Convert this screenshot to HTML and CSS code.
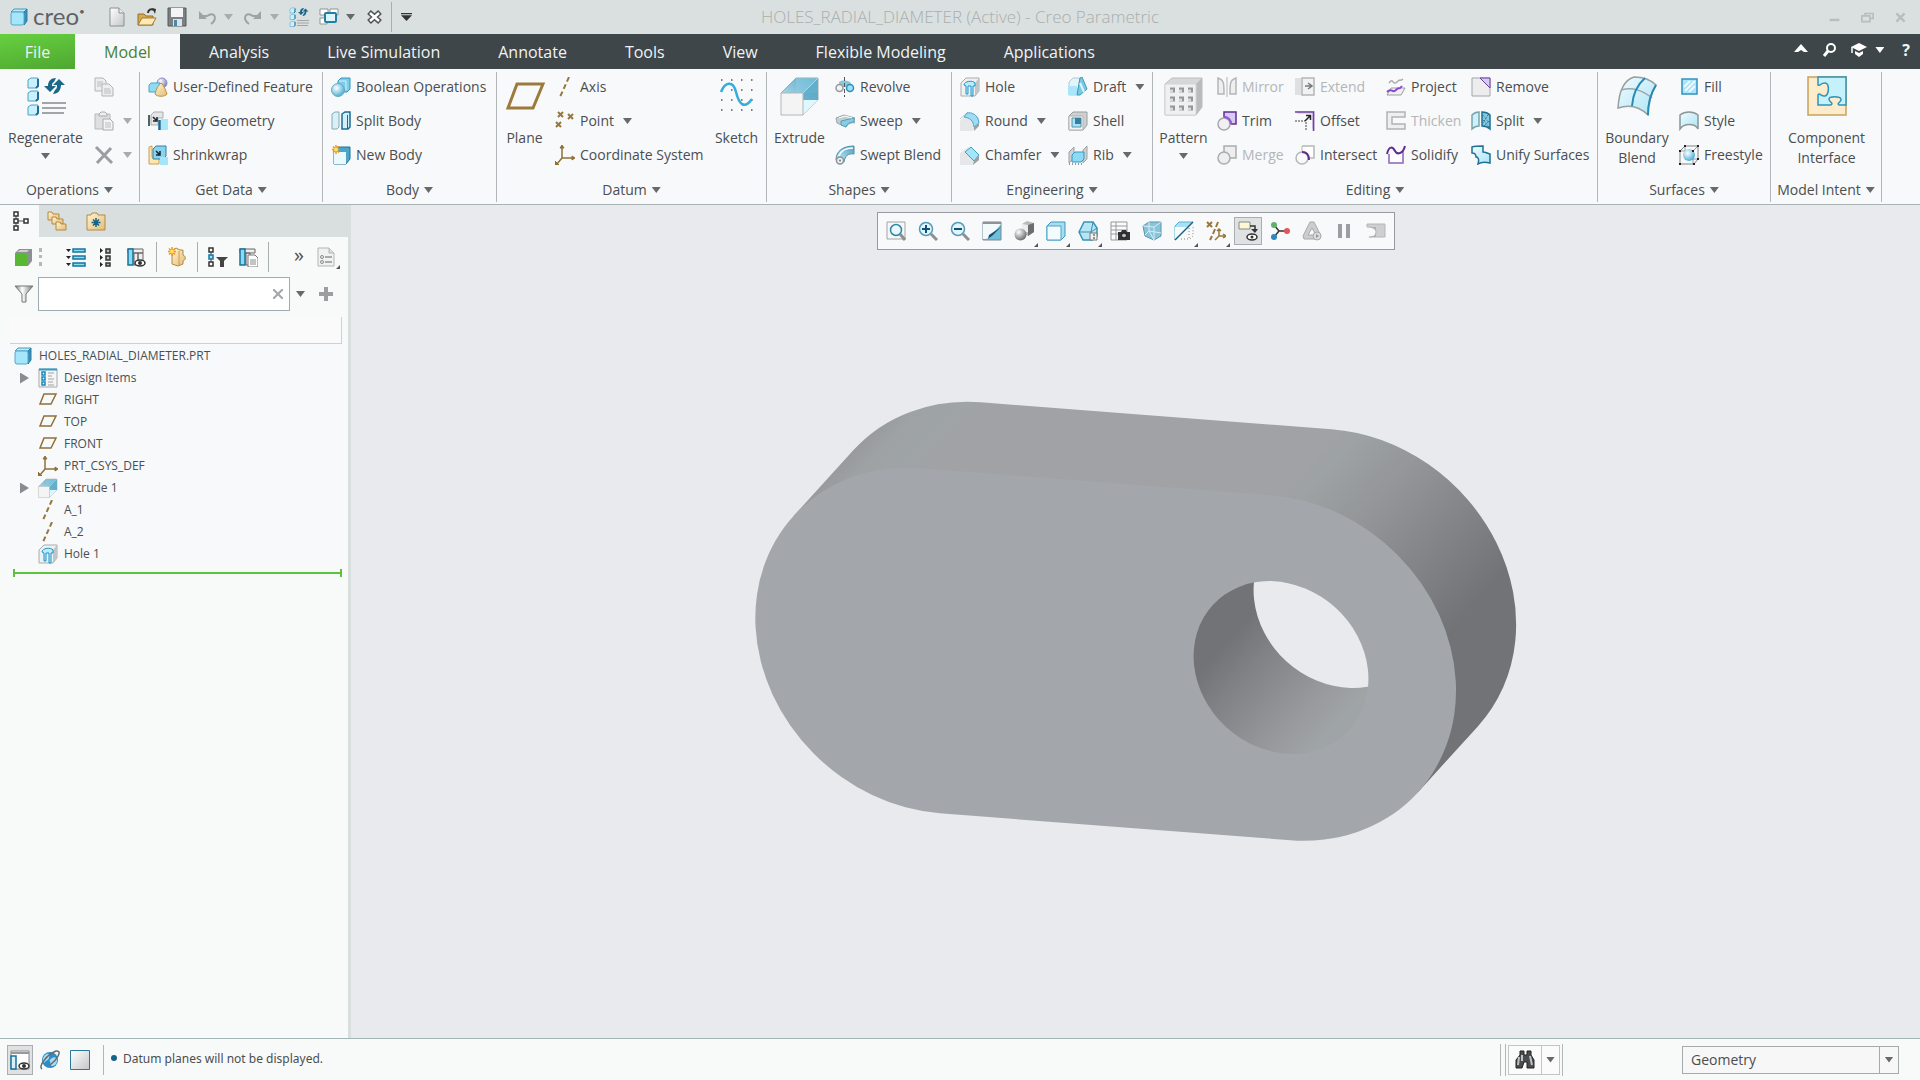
FILE: index.html
```html
<!DOCTYPE html>
<html lang="en">
<head>
<meta charset="utf-8">
<title>HOLES_RADIAL_DIAMETER (Active) - Creo Parametric</title>
<link rel="stylesheet" href="styles.css">
</head>
<body>
<svg class="defs" width="0" height="0" aria-hidden="true">
<defs>
<linearGradient id="blue" x1="0" y1="0" x2="1" y2="1"><stop offset="0" stop-color="#f2fbfe"/><stop offset="1" stop-color="#a9e4f7"/></linearGradient>
<linearGradient id="deep" x1="1" y1="0" x2="0" y2="1"><stop offset="0" stop-color="#4e9fc0"/><stop offset="1" stop-color="#c9f0fb"/></linearGradient>
<linearGradient id="gray" x1="0" y1="0" x2="1" y2="1"><stop offset="0" stop-color="#fff"/><stop offset="1" stop-color="#c4c6c8"/></linearGradient>
<linearGradient id="metal" x1="0" y1="0" x2="1" y2="0"><stop offset="0" stop-color="#777"/><stop offset=".4" stop-color="#fff"/><stop offset="1" stop-color="#777"/></linearGradient>
<linearGradient id="gold" x1="0" y1="0" x2="1" y2="1"><stop offset="0" stop-color="#fff3d4"/><stop offset="1" stop-color="#e5bd76"/></linearGradient>
<radialGradient id="ball" cx=".38" cy=".35" r=".65"><stop offset="0" stop-color="#fff"/><stop offset="1" stop-color="#4db1d6"/></radialGradient>
<radialGradient id="steel" cx=".35" cy=".3" r=".75"><stop offset="0" stop-color="#fff"/><stop offset="1" stop-color="#666"/></radialGradient>
<radialGradient id="lilac" cx=".35" cy=".3" r=".7"><stop offset="0" stop-color="#fff"/><stop offset="1" stop-color="#7d83c0"/></radialGradient>

<symbol id="cube" viewBox="0 0 20 20"><path d="M2 5l3-3h13l-3 3z" fill="#bfeaf8" stroke="#3f9cc0"/><path d="M15 5l3-3v12l-3 4z" fill="#3a8fb8" stroke="#2a7fa8"/><rect x="2" y="5" width="13" height="13" rx="2" fill="#a5e6fb" stroke="#53a8c8"/></symbol>
<symbol id="page" viewBox="0 0 20 20"><path d="M3 1h9l5 5v13H3z" fill="url(#gray)" stroke="#8b8f91"/><path d="M12 1v5h5" fill="#eee" stroke="#8b8f91"/></symbol>
<symbol id="open" viewBox="0 0 20 20"><path d="M1 18V7h6l2 2h7v9z" fill="#d9a94e" stroke="#94702b"/><path d="M1 18l4-7h14l-4 7z" fill="#ffe9b5" stroke="#a07c36"/><path d="M11 6c0-3 3-5 6-3" fill="none" stroke="#333" stroke-width="2"/><path d="M15 1l4 1-1 5z" fill="#333"/></symbol>
<symbol id="save" viewBox="0 0 20 20"><path d="M1 1h18v18H1z" fill="#7b8082" stroke="#55595b"/><path d="M4 1h12v9H4z" fill="#f4f4f4"/><path d="M6 12h9v7H6z" fill="#d4e6ec"/><path d="M7 13h3v6H7z" fill="#4a88a4"/></symbol>
<symbol id="undo" viewBox="0 0 20 20"><path d="M3 9h7c8-6 11 4 4 8" fill="none" stroke="#9da2a3" stroke-width="2"/><path d="M2 4v8h8z" fill="#9da2a3"/></symbol>
<symbol id="redo" viewBox="0 0 20 20"><path d="M17 9h-7C2 3-1 13 6 17" fill="none" stroke="#9da2a3" stroke-width="2"/><path d="M18 4v8h-8z" fill="#9da2a3"/></symbol>
<symbol id="regen" viewBox="0 0 40 40"><g stroke="#4aa3c6" fill="#c9f0fc"><path d="M2 4l3-2h7v7l-2 3H2z"/><path d="M2 17l3-2h7v7l-2 3H2z"/><path d="M2 31l3-2h7v7l-2 3H2z"/></g><path d="M12 3v7l-2 2M12 16v7l-2 2M12 30v7l-2 2" fill="none" stroke="#216f96" stroke-width="2"/><path d="M18 10h4c0-5 3-8 8-8l-2 4c-2 1-2 2-2 4h4l-6 6z" fill="#1b6788"/><path d="M39 9h-4c0 5-3 9-8 9l2-4c2-1 2-3 2-5h-4l6-6z" fill="#1b6788"/><path d="M16 27h24M16 32h24M16 37h22" stroke="#a2a4a7" stroke-width="2"/></symbol>
<symbol id="windows" viewBox="0 0 20 20"><g fill="#fff" stroke="#8f9597"><path d="M1 2h8v6H1zM11 2h8v6h-8zM1 11h7v6H1z"/></g><rect x="6" y="6" width="11" height="9" rx="1" fill="#dcf4fc" stroke="#257ea3" stroke-width="2"/></symbol>
<symbol id="closewin" viewBox="0 0 20 20"><path d="M4 5l11 10M15 5L4 15" stroke="#4d5254" stroke-width="5.500"/><path d="M5 6l9 8M14 6l-9 8" stroke="#fff" stroke-width="2.500"/></symbol>
<symbol id="copy" viewBox="0 0 20 20"><g fill="#eceeef" stroke="#b1b4b6"><path d="M1 1h8l3 3v10H1z"/><path d="M8 7h7l4 4v8H8z"/></g><path d="M3 5h6M3 7h5M3 9h4M10 12h6M10 14h7M10 16h7" stroke="#babdbf"/></symbol>
<symbol id="paste" viewBox="0 0 20 20"><path d="M1 3h15v15H1z" fill="#dddfe0" stroke="#b6b9bb"/><path d="M5 3l2-2h4l2 2v2H5z" fill="#eee" stroke="#aaa"/><path d="M9 8h7l3 3v8H9z" fill="#f4f4f4" stroke="#aaa"/><path d="M11 12h6M11 14h6M11 16h6" stroke="#babdbf"/></symbol>
<symbol id="delete" viewBox="0 0 20 20"><path d="M2 2l16 16M17 3L3 18" stroke="#9b9da0" stroke-width="3"/></symbol>
<symbol id="udf" viewBox="0 0 20 20"><circle cx="14" cy="6" r="5" fill="url(#lilac)" stroke="#8e93c4"/><path d="M1 8l2-2h9v9H1z" fill="#8edcf4" stroke="#4aa5c8"/><path d="M13 6c3 2 5 8 6 11-2 3-10 3-12 0 1-4 3-9 6-11z" fill="url(#gold)" stroke="#ba9149"/></symbol>
<symbol id="copygeom" viewBox="0 0 20 20"><path d="M3 4l3-3h9v6h-5v7H3z" fill="#e4e6e8" stroke="#a9adb0"/><path d="M1 4v11" stroke="#53616b" stroke-width="2"/><path d="M5 6l3 3M9 6v4H5" stroke="#222" fill="none" stroke-width="1.500"/><path d="M13 8h7v11h-7z" fill="#a8e8fb"/><path d="M11.500 9v10" stroke="#186a94" stroke-width="2.500"/></symbol>
<symbol id="shrink" viewBox="0 0 20 20"><path d="M1 2l3-1v11h7v7H1z" fill="#ffe6b0" stroke="#c69e56"/><path d="M5 4l3-3h10v10l-3 3H5z" fill="#8bd2ec" stroke="#2c82a8"/><path d="M8 6l3 3M12 6v4H8" stroke="#123" fill="none" stroke-width="1.500"/><path d="M12 12h8v8h-8z" fill="#a5e5fa"/></symbol>
<symbol id="boolean" viewBox="0 0 20 20"><path d="M7 4l3-3h9v11l-3 3H7z" fill="#7dcdea" stroke="#3795bb"/><path d="M8 4h7v9" stroke="#d4f3fc" fill="none"/><circle cx="7" cy="13" r="6.500" fill="url(#ball)" stroke="#6aa9c1"/></symbol>
<symbol id="splitbody" viewBox="0 0 20 20"><path d="M1 3l3-2h4v15l-2 2H1z" fill="#daf0f6" stroke="#86a9b5"/><path d="M11 3l3-2h5v15l-2 2h-6z" fill="#d3effa" stroke="#1b6d97" stroke-width="1.500"/><path d="M16.500 4v14" stroke="#1b6d97"/></symbol>
<symbol id="newbody" viewBox="0 0 20 20"><path d="M3 5l3-3h13v12l-4 5H3z" fill="#4ba5c9" stroke="#1d759d"/><path d="M3 7h12v12H3z" fill="#e9f9fd"/><path d="M5 0v9M1 4.500h8M2 1.500l6 6M8 1.500l-6 6" stroke="#f19420" stroke-width="1.500"/><circle cx="5" cy="4.500" r="2" fill="#ffe15a"/></symbol>
<symbol id="plane" viewBox="0 0 40 40"><path d="M12 8h26L28 32H3z" fill="none" stroke="#9b7a3c" stroke-width="3"/></symbol>
<symbol id="planes" viewBox="0 0 20 20"><path d="M6 4h12l-5 10H2z" fill="none" stroke="#8f7038" stroke-width="1.500"/></symbol>
<symbol id="axis" viewBox="0 0 20 20"><path d="M14 0L5 20" stroke="#97773a" stroke-width="2" stroke-dasharray="5 3"/></symbol>
<symbol id="point" viewBox="0 0 20 20"><path d="M3 1l5 5M8 1L3 6M13 3l5 5M18 3l-5 5M1 11l5 5M6 11l-5 5" stroke="#97773a" stroke-width="2"/></symbol>
<symbol id="csys" viewBox="0 0 20 20"><path d="M7 2v11h11M7 13l-5 6" fill="none" stroke="#8f7038" stroke-width="1.500"/><path d="M5 3l2-3 2 3zM17 11l3 2-3 2zM0 16v4h4z" fill="#8f7038" stroke="#8f7038"/></symbol>
<symbol id="sketch" viewBox="0 0 40 40"><path d="M4 4h34M4 14h34M4 24h34M4 34h34" stroke="#555" stroke-width="1.500" stroke-dasharray="1.500 8.500"/><path d="M4 16C8 6 16 4 19 16s8 18 16 7" fill="none" stroke="#35abdf" stroke-width="2.500"/></symbol>
<symbol id="extrude" viewBox="0 0 40 40"><path d="M1 17L16 2h22v22L23 39z" fill="url(#deep)" stroke="#a2a9ac"/><path d="M16 2v15h22V2z" fill="#8ccbe2" fill-opacity=".6"/><path d="M23 17L38 2v22H23z" fill="#58a8c6" fill-opacity=".7"/><path d="M23 39V24h15z" fill="#dff7fd"/><path d="M1 17h22v22H1z" fill="#f4f4f4" stroke="#b4b6b8"/><path d="M23 17L38 2" stroke="#b9d3dc"/></symbol>
<symbol id="revolve" viewBox="0 0 20 20"><path d="M4 5c3-2 9-2 12 1v4H4z" fill="#86c8de"/><circle cx="4.500" cy="11" r="3.500" fill="#f3f3f3" stroke="#999" stroke-width="1.500"/><circle cx="15" cy="11" r="3.500" fill="#9fe2fa" stroke="#2f8fb7" stroke-width="1.500"/><path d="M9.500 0v20" stroke="#555" stroke-dasharray="4 2"/></symbol>
<symbol id="sweep" viewBox="0 0 20 20"><path d="M1 7l8-3 11 3v5c-4-1-7 1-9 4l-9-4z" fill="#c3ced2" stroke="#98a6ab"/><path d="M6 10l13-3v4c-5 0-7 2-8 5l-5-2z" fill="#8acbe2" stroke="#4fa0bf"/><path d="M4 7l6-2 7 2" stroke="#fff" fill="none"/></symbol>
<symbol id="swept" viewBox="0 0 20 20"><path d="M1 15C1 6 8 1 19 1v8c-6-1-9 2-10 8z" fill="url(#deep)" stroke="#4b90ac"/><path d="M4 11c2-6 7-8 14-8" stroke="#fff" fill="none" stroke-width="1.500"/><circle cx="5" cy="15.500" r="3.500" fill="#f0f0f0" stroke="#8e9294" stroke-width="1.500"/><circle cx="5" cy="15.500" r="1" fill="#777"/></symbol>
<symbol id="hole" viewBox="0 0 20 20"><path d="M1 6l5-5h13v13l-4 5H1z" fill="#f0f1f2" stroke="#a8acae"/><path d="M15 6l4-5v13l-4 5z" fill="#c2c5c7"/><path d="M4 8c0-4 9-5 11-2v3h-2v10h-2V9H8v8H6V9z" fill="#bfeaf8" stroke="#1b95cc"/></symbol>
<symbol id="round" viewBox="0 0 20 20"><path d="M0 10l9-9 10 5v9l-7 5H0z" fill="#e6e7e8"/><path d="M0 8L8 1" stroke="#c6c8ca"/><path d="M7 2c4-1 11 1 12 10l-5 4C13 9 10 7 4 6z" fill="#9ddcf2" stroke="#4ea8c9"/><path d="M14 16l5-4v3l-5 5z" fill="#9da1a3"/></symbol>
<symbol id="chamfer" viewBox="0 0 20 20"><path d="M0 8l8-6 11 8v5l-6 5H0z" fill="#e6e7e8"/><path d="M11 2l8 8-5 6-9-9z" fill="#a5e5f9" stroke="#3e9dc1"/><path d="M14 16l5-6v5l-6 5z" fill="#9da1a3"/></symbol>
<symbol id="draft" viewBox="0 0 20 20"><path d="M1 5l4-4h7L9 18H1z" fill="#e4f4f9" stroke="#b4c8cf"/><path d="M0 9h9v9H0z" fill="#a9e6f9"/><path d="M9 18l3-17 2-1 5 12-7 6z" fill="#7cc9e4" stroke="#3c98bb"/><path d="M12 6l4 9" stroke="#dff6fd" stroke-width="2"/></symbol>
<symbol id="shell" viewBox="0 0 20 20"><path d="M1 5l4-4h14v13l-4 5H1z" fill="#ced0d2" stroke="#999da0"/><path d="M1 5h14v14H1z" fill="#f1f2f2" stroke="#afb2b4"/><path d="M4 7h9v9H4z" fill="#a8e4f6" stroke="#5495ac"/><path d="M7 7h6v6H7z" fill="#397f9d"/></symbol>
<symbol id="rib" viewBox="0 0 20 20"><path d="M1 7l5-5v11l-5 5z" fill="#cfd2d3" stroke="#9fa3a5"/><path d="M15 5l4-4v13l-4 4z" fill="#ced1d2" stroke="#9fa3a5"/><path d="M4 10l3-3h9v7l-3 3H4z" fill="#8cdaf3" stroke="#3696bb"/><path d="M1 19h13" stroke="#333" stroke-dasharray="1 2"/></symbol>
<symbol id="pattern" viewBox="0 0 40 40"><path d="M1 8l7-6h30v29l-6 8H1z" fill="#d6d7d8" stroke="#bcbebf"/><path d="M32 8l6-6v29l-6 8z" fill="#b9bbbd"/><path d="M1 8h31v31H1z" fill="#f0f0f1" stroke="#d3d4d5"/><path d="M6 14h24M6 23h24M6 32h24" stroke="#939597" stroke-width="5" stroke-dasharray="5 4"/><path d="M6 15h24M6 24h24M6 33h24" stroke="#d8d9da" stroke-width="3" stroke-dasharray="3 6"/></symbol>
<symbol id="mirror" viewBox="0 0 20 20"><path d="M1 1c6 2 6 5 6 16H1zM19 1c-6 2-6 5-6 16h6z" fill="#efefef" stroke="#b3b5b7" stroke-width="1.500"/><path d="M10 0v20" stroke="#b3b5b7"/></symbol>
<symbol id="trim" viewBox="0 0 20 20"><path d="M7 1h12v12h-5c0-4-3-7-7-7z" fill="#d7cbf5" stroke="#5e2d91" stroke-width="1.500"/><circle cx="7" cy="13" r="6" fill="#eee" fill-opacity=".7" stroke="#a7a8aa" stroke-width="1.500"/><path d="M7 6c4 0 7 3 7 7" fill="none" stroke="#9556da" stroke-width="2"/></symbol>
<symbol id="merge" viewBox="0 0 20 20"><path d="M7 1h12v12H7z" fill="#eee" stroke="#aaacae" stroke-width="1.500"/><circle cx="7" cy="13" r="6" fill="#eee" stroke="#aaacae" stroke-width="1.500"/></symbol>
<symbol id="extend" viewBox="0 0 20 20"><path d="M0 1h6v17H0z" fill="#dfe0e1"/><path d="M7 1h12v17H7z" fill="#f2f2f3" stroke="#b3b5b7" stroke-width="1.500"/><path d="M10 9h6M13 6l4 3-4 3" fill="none" stroke="#77797b" stroke-width="1.500"/></symbol>
<symbol id="offset" viewBox="0 0 20 20"><path d="M0 0h20v20" fill="#e0d5f1"/><path d="M0 3h17v17H0z" fill="#f8f9fb"/><path d="M0 1h18.500v19" fill="none" stroke="#6e449b" stroke-width="1.500"/><path d="M0 10h10M11 11v9" stroke="#444" stroke-dasharray="2 1"/><path d="M10 10l5-5M11 4.500h4.500V9" fill="none" stroke="#222" stroke-width="1.500"/></symbol>
<symbol id="intersect" viewBox="0 0 20 20"><path d="M7 1h12v12h-5" fill="#fff" stroke="#b5b6b8" stroke-width="1.500"/><path d="M7 6V1" stroke="#b5b6b8"/><circle cx="7" cy="13" r="6" fill="none" stroke="#b5b6b8" stroke-width="1.500"/><path d="M7 7c4 0 7 2 7 8" fill="none" stroke="#5e2d91" stroke-width="2"/></symbol>
<symbol id="project" viewBox="0 0 20 20"><path d="M3 6c4-6 4 3 8-1s3 0 6-3" fill="none" stroke="#a9abad" stroke-width="1.500"/><path d="M5 11h14l-4 7H1z" fill="#f0f0f0" stroke="#9c9ea0"/><path d="M1 15c5-5 5 2 9-2s2 1 6-4" fill="none" stroke="#8746cf" stroke-width="2"/></symbol>
<symbol id="thicken" viewBox="0 0 20 20"><path d="M1 1h18v5H6v7h13v5H1z" fill="#efefef" stroke="#b1b3b5" stroke-width="1.500"/></symbol>
<symbol id="solidify" viewBox="0 0 20 20"><path d="M3 9v9h14V5" fill="#fff" stroke="#8e62bd" stroke-width="1.500"/><path d="M1 9C3 0 7 2 9 6s8 3 10-5" fill="none" stroke="#5e2d91" stroke-width="2"/></symbol>
<symbol id="remove" viewBox="0 0 20 20"><path d="M1 1h18v18H1z" fill="#ededee" stroke="#a4a5a8"/><path d="M9 1h10v10z" fill="#d6c9f2" stroke="#6b3ca0"/></symbol>
<symbol id="split" viewBox="0 0 20 20"><path d="M1 4c2-2 5-3 7-3v14c-3 0-5 1-7 3z" fill="#c9f2fb" stroke="#7ea2ad" stroke-width="1.500"/><path d="M11 1c3 0 6 1 8 3v14c-2-2-5-3-8-3z" fill="#88c9df" stroke="#1d6f92" stroke-width="1.500"/><path d="M12 4l6 8M12 9l6 7M17 4l-5 8M18 10l-5 5" stroke="#1d6f92" stroke-dasharray="1 1"/></symbol>
<symbol id="unify" viewBox="0 0 20 20"><path d="M1 2c3-1 7-1 11-1v6c2 0 4 1 7 2v9c-4-1-8-2-12 1 1-4 1-5-1-7H5c0-2-1-4-4-4z" fill="url(#blue)" stroke="#1c7195" stroke-width="1.500"/></symbol>
<symbol id="blend" viewBox="0 0 40 40"><path d="M1 32C2 15 7 4 17 1c9 0 16 2 22 8-5 8-8 18-8 30C23 31 13 28 1 32z" fill="url(#blue)" stroke="#999ea1" stroke-width="1.500"/><path d="M4 14c12-3 21 0 31 8" fill="none" stroke="#a0a5a8" stroke-width="1.500"/><path d="M28 2C20 9 16 17 15 30M39 9c-5 8-8 18-8 30" fill="none" stroke="#268bb5" stroke-width="2"/></symbol>
<symbol id="fill" viewBox="0 0 20 20"><path d="M3 2h15v15H3z" fill="#aee5f8" stroke="#2f93bf" stroke-width="1.500"/><path d="M5 10l6-6M6 14L16 4M10 15l6-6" stroke="#fff" stroke-width="1.500"/></symbol>
<symbol id="style" viewBox="0 0 20 20"><path d="M1 4c5-4 13-4 18 0v14c-3-6-14-6-18 0z" fill="url(#blue)" stroke="#8c9598" stroke-width="1.500"/></symbol>
<symbol id="freestyle" viewBox="0 0 20 20"><path d="M1 6l5-5h13v13l-4 5H1z" fill="none" stroke="#808386"/><path d="M1 6h13v13M14 6l5-5M6 1v13h13" fill="none" stroke="#989b9e"/><circle cx="10" cy="10" r="6" fill="url(#ball)"/><path d="M0 5h2v2H0zM5 0h2v2H5zM18 0h2v2h-2zM13 5h2v2h-2zM0 18h2v2H0zM14 18h2v2h-2zM18 13h2v2h-2z" fill="#222"/></symbol>
<symbol id="puzzle" viewBox="0 0 40 40"><path d="M1 1h38v38H1z" fill="#fdeccb" stroke="#c8a35a" stroke-width="1.500"/><path d="M11 1h28v28h-7c-3-2 3-3 2-6s-12-3-12 0 5 4 2 6H11V19c2-3 3 2 7 1s5-13 0-13-4 3-7 2z" fill="#c5f1fd" stroke="#2e93b9" stroke-width="1.500"/></symbol>
<symbol id="collapse" viewBox="0 0 16 16"><path d="M1 10l7-8 7 8h-4L8 8l-3 2z" fill="#fff"/></symbol>
<symbol id="search" viewBox="0 0 16 16"><circle cx="9" cy="6" r="4" fill="none" stroke="#fff" stroke-width="2"/><path d="M6 9l-4 5" stroke="#fff" stroke-width="3"/></symbol>
<symbol id="learn" viewBox="0 0 16 16"><path d="M0 5l8-4 8 4-8 4z" fill="#fff"/><path d="M1 5v6" stroke="#fff" stroke-width="1.500"/><path d="M4 9l4 2 4-2v3l-4 3-4-3z" fill="#fff"/></symbol>
<symbol id="tree" viewBox="0 0 20 20"><path d="M4 4v12M6 10h8" stroke="#555"/><path d="M2 1h4v4H2zM2 8h4v4H2zM2 15h4v4H2zM12 8h4v4h-4z" fill="#fff" stroke="#333" stroke-width="1.500"/></symbol>
<symbol id="folders" viewBox="0 0 20 20"><g fill="url(#gold)" stroke="#b18b43"><path d="M1 1h4l1 2h6v6H1z"/><path d="M5 6h4l1 2h6v5H5z"/><path d="M9 11h4l1 2h5v6H9z"/></g></symbol>
<symbol id="favorites" viewBox="0 0 20 20"><path d="M1 4h4l1-2h5l1 2h7v15H1z" fill="url(#gold)" stroke="#b18b43"/><path d="M10 7v9M5.500 11.500h9M7 8.500l6 6M13 8.500l-6 6" stroke="#146588" stroke-width="1.500"/></symbol>
<symbol id="green" viewBox="0 0 20 20"><path d="M2 6l4-4h13v12l-4 5H2z" fill="#8d9092"/><path d="M4 5l3-2h9l-2 2z" fill="#cfd1d2"/><path d="M2 7h12v12H2z" fill="#58b831"/></symbol>
<symbol id="expand" viewBox="0 0 20 20"><path d="M0 2h5L2.500 5zM0 9h5l-2.500 3zM0 16h5l-2.500 3z" fill="#222"/><path d="M7 2h12v3H7zM7 9h12v3H7zM7 16h12v3H7z" fill="#8ddcf6" stroke="#15759e" stroke-width="1.500"/></symbol>
<symbol id="shrinktree" viewBox="0 0 20 20"><path d="M4 1v5l3-2.500zM4 8v5l3-2.500zM4 15v5l3-2.500z" fill="#222"/><path d="M10 2h4v4h-4zM10 9h4v4h-4zM10 16h4v3h-4z" fill="#bbb" stroke="#333" stroke-width="1.500"/></symbol>
<symbol id="columns" viewBox="0 0 20 20"><path d="M2 2h15v4H2zM8 6h4v12H8zM12 6h5v12h-5z" fill="#eee" stroke="#666"/><path d="M2 2h5v16H2z" fill="#8bdaf4" stroke="#1a7299" stroke-width="1.500"/><ellipse cx="14" cy="16" rx="5" ry="3" fill="#fff" stroke="#333" stroke-width="1.500"/><circle cx="14" cy="16" r="2" fill="#333"/></symbol>
<symbol id="newpart" viewBox="0 0 20 20"><path d="M5 4l4-3 4 2h3v5c3 1 3 5 0 6v3l-5 2-6-2z" fill="url(#gold)" stroke="#b18b43"/><path d="M12 4v15" stroke="#c79e53"/><path d="M5 0v9M1 4.500h8M2 1.500l6 6M8 1.500l-6 6" stroke="#f19420" stroke-width="1.500"/><circle cx="5" cy="4.500" r="2" fill="#ffe15a"/></symbol>
<symbol id="treefilter" viewBox="0 0 20 20"><path d="M3 2v16" stroke="#444"/><path d="M1 1h4v4H1zM1 15h4v4H1z" fill="#fff" stroke="#333" stroke-width="1.500"/><path d="M1 8h4v4H1z" fill="#9fe2f8" stroke="#15759e" stroke-width="1.500"/><path d="M8 10h12l-4 4v6h-4v-6z" fill="#444"/></symbol>
<symbol id="treecols" viewBox="0 0 20 20"><path d="M2 2h15v4H2zM8 6h4v12H8z" fill="#eee" stroke="#666"/><path d="M2 2h5v16H2z" fill="#8bdaf4" stroke="#1a7299" stroke-width="1.500"/><path d="M10 8h7l3 3v9H10z" fill="#fff" stroke="#777"/><path d="M12 13h6M12 15h6M12 17h6" stroke="#888"/></symbol>
<symbol id="report" viewBox="0 0 20 20"><path d="M1 1h11l5 5v13H1z" fill="#f1f1f2" stroke="#b2b5b6"/><path d="M12 1v5h5" fill="#ddd" stroke="#b2b5b6"/><path d="M8 10h7M8 15h7" stroke="#909496" stroke-width="1.500"/><circle cx="5" cy="10" r="1.500" fill="none" stroke="#888"/><circle cx="5" cy="15" r="1.500" fill="none" stroke="#888"/></symbol>
<symbol id="funnel" viewBox="0 0 20 20"><path d="M1 2h18l-7 8v8l-4 0v-8z" fill="url(#metal)" stroke="#777"/></symbol>
<symbol id="items" viewBox="0 0 20 20"><path d="M1 1h18v18H1z" fill="#f6f6f6" stroke="#a5a9ab"/><path d="M1 1.500h18" stroke="#2e9ccc" stroke-width="2"/><path d="M4 4h3v3H4zM4 9h3v3H4zM4 14h3v3H4z" fill="#fff" stroke="#1688bd" stroke-width="1.500"/><path d="M10 5h6M10 8h4M10 11h6M10 14h5M10 17h6" stroke="#9fa2a4"/></symbol>
<symbol id="zoomfit" viewBox="0 0 20 20"><path d="M1 1h18v17H1z" fill="#f7f7f8" stroke="#a1a5a8"/><circle cx="10" cy="9" r="5.500" fill="#e8f8fd" stroke="#2d86a8" stroke-width="1.500"/><path d="M14 13l5 6" stroke="#8d9092" stroke-width="3"/></symbol>
<symbol id="zoomin" viewBox="0 0 20 20"><circle cx="8" cy="8" r="6.500" fill="#e1f6fc" stroke="#539bb6" stroke-width="1.500"/><path d="M13 13l6 6" stroke="#8d9092" stroke-width="3"/><path d="M4 8h8M8 4v8" stroke="#124f78" stroke-width="2"/></symbol>
<symbol id="zoomout" viewBox="0 0 20 20"><circle cx="8" cy="8" r="6.500" fill="#e1f6fc" stroke="#539bb6" stroke-width="1.500"/><path d="M13 13l6 6" stroke="#8d9092" stroke-width="3"/><path d="M4 8h8" stroke="#124f78" stroke-width="2"/></symbol>
<symbol id="repaint" viewBox="0 0 20 20"><path d="M1 1h18v18H1z" fill="#6fbfdb" stroke="#7b8b92"/><path d="M1 3h18L10 14c-1 3-4 4-9 4z" fill="#f3fafc"/><path d="M19 6l-9 9-4 3 1-4z" fill="#16506f"/><path d="M1 2h18" stroke="#8d9598" stroke-width="2"/></symbol>
<symbol id="shading" viewBox="0 0 20 20"><path d="M8 3l5-3 7 2v9l-6 4-6-3z" fill="#b8babc"/><path d="M14 4l6-2v9l-6 4z" fill="#6b6d6f"/><path d="M8 3l6 1v7H8z" fill="#eceded"/><circle cx="6.500" cy="13.500" r="6" fill="url(#steel)"/></symbol>
<symbol id="display" viewBox="0 0 20 20"><path d="M1 5l4-4h14v14l-4 4H1z" fill="#a7ddef" stroke="#3d99bc"/><path d="M1 5h14v14H1z" fill="#f2fbfe" stroke="#4ba5c7"/></symbol>
<symbol id="saved" viewBox="0 0 20 20"><path d="M1 11L6 1h9l4 6v8l-5 4H5z" fill="#b6e6f5" stroke="#3a92b2" stroke-width="1.500"/><path d="M1 11h12l6-4M13 11v8M13 11l2-10" fill="none" stroke="#3a92b2"/><path d="M12 12h7v7h-7z" fill="#f3f3f3" stroke="#777"/><path d="M15 14h2M15 17h2" stroke="#333"/></symbol>
<symbol id="capture" viewBox="0 0 20 20"><path d="M1 1h16v18H1zM1 5h16M1 9h16M1 13h16M6 1v18" fill="#fbfbfb" stroke="#96999b"/><path d="M8 11h3l1-2h4l1 2h3v8H8z" fill="#333"/><circle cx="14" cy="14.500" r="2.500" fill="#bbb" stroke="#111"/></symbol>
<symbol id="perspective" viewBox="0 0 20 20"><path d="M1 5l6-4 12 0v14l-7 4L3 15z" fill="#8bc4d9" stroke="#5796ad"/><path d="M1 5l11 1 7-5M12 6v13M7 1v9l5 9M7 10l12 2M3 14l4-4" fill="none" stroke="#d4eef7"/></symbol>
<symbol id="section" viewBox="0 0 20 20"><path d="M1 5l4-4h14L1 19z" fill="#a8e1f3" stroke="#5db0cc"/><path d="M1 6h13L1 19z" fill="#f3fbfe"/><path d="M7 18h9l3-3V4M15 7v11" fill="none" stroke="#888" stroke-dasharray="1 2"/><path d="M19 1L1 19" stroke="#185f80" stroke-width="1.500"/></symbol>
<symbol id="datumdisp" viewBox="0 0 20 20"><path d="M1 1l5 5M6 1L1 6M12 1l-2 5M9 8l-2 5M6 15l-2 4" stroke="#97773a" stroke-width="2"/><path d="M13 8v7h6M13 15l-4 4M17 13l3 2-3 2M11 10l2-2 2 2" fill="none" stroke="#97773a" stroke-width="1.500"/></symbol>
<symbol id="annot" viewBox="0 0 20 20"><path d="M1 1h11v7H1z" fill="#fff8d5" stroke="#858789"/><path d="M12 5h5v4" fill="none" stroke="#333" stroke-width="1.500"/><path d="M13 8h7l-3 4z" fill="#333"/><ellipse cx="14" cy="16" rx="5" ry="3" fill="#fff" stroke="#333" stroke-width="1.500"/><circle cx="14" cy="16" r="1.500" fill="#333"/></symbol>
<symbol id="spin" viewBox="0 0 20 20"><path d="M4 4l5 6h8M9 10l-5 6" fill="none" stroke="#333" stroke-width="1.500"/><circle cx="4" cy="4" r="3" fill="#61b26b"/><circle cx="17" cy="10" r="3" fill="#e2555a"/><circle cx="4" cy="16" r="3" fill="#2e88bd"/></symbol>
<symbol id="analyze" viewBox="0 0 20 20"><path d="M8 1h4l7 14-2 3H2l-1-3zM10 7l-4 7h8z" fill="#cbcdce" stroke="#a8aaac" fill-rule="evenodd"/><circle cx="15" cy="15" r="4" fill="#ddd" stroke="#aaa"/><path d="M14 13v4l3-2z" fill="#999"/></symbol>
<symbol id="pause" viewBox="0 0 20 20"><path d="M4 3h4v14H4zM12 3h4v14h-4z" fill="#9b9da0"/></symbol>
<symbol id="resume" viewBox="0 0 20 20"><path d="M1 3h18v13H3c5 0 7-2 7-5S7 6 1 6z" fill="#cdcfd0" stroke="#b4b6b8"/><path d="M3 16c5 0 7-2 7-5S7 6 1 6h9v10z" fill="#aeb0b2"/></symbol>
<symbol id="navtoggle" viewBox="0 0 20 20"><path d="M1 1h18v18H1z" fill="#fff" stroke="#888"/><path d="M1 3h18" stroke="#999" stroke-width="2"/><path d="M1 6h5v13H1z" fill="#d7eff7" stroke="#1a7299" stroke-width="1.500"/><ellipse cx="14" cy="16" rx="5" ry="3" fill="#fff" stroke="#333" stroke-width="1.500"/><circle cx="14" cy="16" r="2" fill="#333"/></symbol>
<symbol id="globe" viewBox="0 0 20 20"><circle cx="10" cy="10" r="8" fill="#2a8dc8"/><path d="M5 5c4-3 5 0 4 3s-3 2-5 5c-2-3-1-6 1-8zM12 8c3-2 5 0 5 3s-3 5-5 5-1-3-2-4 0-3 2-4z" fill="#a8daf1"/><path d="M2 19C-2 17 6 5 16 1c7-1 1 9-6 14" fill="none" stroke="#666b6e" stroke-width="1.500"/></symbol>
<symbol id="fullscreen" viewBox="0 0 20 20"><path d="M.5.5h19v19H.5z" fill="url(#gray)" stroke="#2b7797"/></symbol>
<symbol id="binoculars" viewBox="0 0 20 20"><path d="M5 1h4v4h3V1h4v4l3 5v8h-7v-6H9l-2 6H1v-8l4-5z" fill="#4a4c4e" stroke="#222"/><path d="M4 7l-1 8M7 5v6M15 6l2 9" stroke="#c0c3c5" stroke-width="2"/></symbol>
</defs>
</svg>

<div class="app">
<header class="titlebar">
  <div class="brand"><svg class="i"><use href="#cube"/></svg><span>creo<sup>•</sup></span></div>
  <div class="quick">
    <button aria-label="New"><svg class="i"><use href="#page"/></svg></button>
    <button aria-label="Open"><svg class="i"><use href="#open"/></svg></button>
    <button aria-label="Save"><svg class="i"><use href="#save"/></svg></button>
    <button class="off" aria-label="Undo"><svg class="i"><use href="#undo"/></svg><i class="caret"></i></button>
    <button class="off" aria-label="Redo"><svg class="i"><use href="#redo"/></svg><i class="caret"></i></button>
    <button aria-label="Regenerate"><svg class="i"><use href="#regen"/></svg></button>
    <button aria-label="Windows"><svg class="i"><use href="#windows"/></svg><i class="caret"></i></button>
    <button aria-label="Close window"><svg class="i"><use href="#closewin"/></svg></button>
    <button class="more" aria-label="Customize toolbar"><i class="caret"></i></button>
  </div>
  <h1>HOLES_RADIAL_DIAMETER (Active) - Creo Parametric</h1>
  <div class="winbtns">
    <button aria-label="Minimize"><svg viewBox="0 0 16 16"><path d="M2 11h12" stroke="#b9bdbd" stroke-width="3"/></svg></button>
    <button aria-label="Restore"><svg viewBox="0 0 16 16"><path d="M5 6V3h10v6h-3M1 6h10v7H1z" fill="none" stroke="#b9bdbd" stroke-width="2"/></svg></button>
    <button aria-label="Close"><svg viewBox="0 0 16 16"><path d="M3 3l10 10M13 3L3 13" stroke="#b9bdbd" stroke-width="3"/></svg></button>
  </div>
</header>

<nav class="tabs">
  <button class="file">File</button><button class="on">Model</button><button>Analysis</button><button>Live Simulation</button><button>Annotate</button><button>Tools</button><button>View</button><button>Flexible Modeling</button><button>Applications</button>
  <div class="help">
    <button aria-label="Collapse ribbon"><svg class="m"><use href="#collapse"/></svg></button>
    <button aria-label="Search"><svg class="m"><use href="#search"/></svg></button>
    <button aria-label="Learning"><svg class="m"><use href="#learn"/></svg><i class="caret"></i></button>
    <button>?</button>
  </div>
</nav>

<div class="ribbon">
  <section class="group g-ops">
    <div class="tools">
      <button class="big"><svg><use href="#regen"/></svg><span>Regenerate</span><i class="caret"></i></button>
      <div class="col">
        <button class="off" aria-label="Copy"><svg class="i"><use href="#copy"/></svg></button>
        <button class="off" aria-label="Paste"><svg class="i"><use href="#paste"/></svg><i class="caret"></i></button>
        <button class="off" aria-label="Delete"><svg class="i"><use href="#delete"/></svg><i class="caret"></i></button>
      </div>
    </div>
    <button class="name">Operations<i class="caret"></i></button>
  </section>
  <section class="group g-data">
    <div class="tools"><div class="col">
      <button><svg class="i"><use href="#udf"/></svg>User-Defined Feature</button>
      <button><svg class="i"><use href="#copygeom"/></svg>Copy Geometry</button>
      <button><svg class="i"><use href="#shrink"/></svg>Shrinkwrap</button>
    </div></div>
    <button class="name">Get Data<i class="caret"></i></button>
  </section>
  <section class="group g-body">
    <div class="tools"><div class="col">
      <button><svg class="i"><use href="#boolean"/></svg>Boolean Operations</button>
      <button><svg class="i"><use href="#splitbody"/></svg>Split Body</button>
      <button><svg class="i"><use href="#newbody"/></svg>New Body</button>
    </div></div>
    <button class="name">Body<i class="caret"></i></button>
  </section>
  <section class="group g-datum">
    <div class="tools">
      <button class="big"><svg><use href="#plane"/></svg><span>Plane</span></button>
      <div class="col">
        <button><svg class="i"><use href="#axis"/></svg>Axis</button>
        <button><svg class="i"><use href="#point"/></svg>Point<i class="caret"></i></button>
        <button><svg class="i"><use href="#csys"/></svg>Coordinate System</button>
      </div>
      <button class="big"><svg><use href="#sketch"/></svg><span>Sketch</span></button>
    </div>
    <button class="name">Datum<i class="caret"></i></button>
  </section>
  <section class="group g-shapes">
    <div class="tools">
      <button class="big"><svg><use href="#extrude"/></svg><span>Extrude</span></button>
      <div class="col">
        <button><svg class="i"><use href="#revolve"/></svg>Revolve</button>
        <button><svg class="i"><use href="#sweep"/></svg>Sweep<i class="caret"></i></button>
        <button><svg class="i"><use href="#swept"/></svg>Swept Blend</button>
      </div>
    </div>
    <button class="name">Shapes<i class="caret"></i></button>
  </section>
  <section class="group g-eng">
    <div class="tools">
      <div class="col">
        <button><svg class="i"><use href="#hole"/></svg>Hole</button>
        <button><svg class="i"><use href="#round"/></svg>Round<i class="caret"></i></button>
        <button><svg class="i"><use href="#chamfer"/></svg>Chamfer<i class="caret"></i></button>
      </div>
      <div class="col">
        <button><svg class="i"><use href="#draft"/></svg>Draft<i class="caret"></i></button>
        <button><svg class="i"><use href="#shell"/></svg>Shell</button>
        <button><svg class="i"><use href="#rib"/></svg>Rib<i class="caret"></i></button>
      </div>
    </div>
    <button class="name">Engineering<i class="caret"></i></button>
  </section>
  <section class="group g-edit">
    <div class="tools">
      <button class="big"><svg><use href="#pattern"/></svg><span>Pattern</span><i class="caret"></i></button>
      <div class="col">
        <button class="off"><svg class="i"><use href="#mirror"/></svg>Mirror</button>
        <button><svg class="i"><use href="#trim"/></svg>Trim</button>
        <button class="off"><svg class="i"><use href="#merge"/></svg>Merge</button>
      </div>
      <div class="col">
        <button class="off"><svg class="i"><use href="#extend"/></svg>Extend</button>
        <button><svg class="i"><use href="#offset"/></svg>Offset</button>
        <button><svg class="i"><use href="#intersect"/></svg>Intersect</button>
      </div>
      <div class="col">
        <button><svg class="i"><use href="#project"/></svg>Project</button>
        <button class="off"><svg class="i"><use href="#thicken"/></svg>Thicken</button>
        <button><svg class="i"><use href="#solidify"/></svg>Solidify</button>
      </div>
      <div class="col">
        <button><svg class="i"><use href="#remove"/></svg>Remove</button>
        <button><svg class="i"><use href="#split"/></svg>Split<i class="caret"></i></button>
        <button><svg class="i"><use href="#unify"/></svg>Unify Surfaces</button>
      </div>
    </div>
    <button class="name">Editing<i class="caret"></i></button>
  </section>
  <section class="group g-surf">
    <div class="tools">
      <button class="big"><svg><use href="#blend"/></svg><span>Boundary<br>Blend</span></button>
      <div class="col">
        <button><svg class="i"><use href="#fill"/></svg>Fill</button>
        <button><svg class="i"><use href="#style"/></svg>Style</button>
        <button><svg class="i"><use href="#freestyle"/></svg>Freestyle</button>
      </div>
    </div>
    <button class="name">Surfaces<i class="caret"></i></button>
  </section>
  <section class="group g-intent">
    <div class="tools"><button class="big"><svg><use href="#puzzle"/></svg><span>Component<br>Interface</span></button></div>
    <button class="name">Model Intent<i class="caret"></i></button>
  </section>
</div>

<main class="work">
  <aside class="panel">
    <div class="ptabs">
      <button class="on" aria-label="Model tree"><svg class="i"><use href="#tree"/></svg></button>
      <button aria-label="Folder browser"><svg class="i"><use href="#folders"/></svg></button>
      <button aria-label="Favorites"><svg class="i"><use href="#favorites"/></svg></button>
    </div>
    <div class="ptools">
      <button class="first" aria-label="Show bodies"><svg class="i"><use href="#green"/></svg></button>
      <span class="grip"></span>
      <button aria-label="Expand all"><svg class="i"><use href="#expand"/></svg></button>
      <button aria-label="Collapse all"><svg class="i"><use href="#shrinktree"/></svg></button>
      <button aria-label="Tree columns"><svg class="i"><use href="#columns"/></svg></button>
      <span class="bar"></span>
      <button aria-label="New item"><svg class="i"><use href="#newpart"/></svg></button>
      <span class="bar"></span>
      <button aria-label="Tree filters"><svg class="i"><use href="#treefilter"/></svg></button>
      <button aria-label="Column setup"><svg class="i"><use href="#treecols"/></svg></button>
      <span class="bar"></span>
      <button class="next" aria-label="More">»</button>
      <button class="corner" aria-label="Settings"><svg class="i"><use href="#report"/></svg></button>
    </div>
    <div class="filter">
      <svg class="i"><use href="#funnel"/></svg>
      <div class="field"><input type="text" aria-label="Filter the tree"><button aria-label="Clear"><svg class="x" viewBox="0 0 10 10"><path d="M0 0l10 10M10 0L0 10" stroke="#a3a7a9" stroke-width="2"/></svg></button></div>
      <button class="drop" aria-label="Filter options"><i class="caret"></i></button>
      <button class="plus" aria-label="Add filter"><svg viewBox="0 0 14 14"><path d="M7 0v14M0 7h14" stroke="#9b9fa1" stroke-width="4"/></svg></button>
    </div>
    <div class="colhead"></div>
    <ul class="treelist">
      <li class="root"><svg class="i"><use href="#cube"/></svg>HOLES_RADIAL_DIAMETER.PRT</li>
      <li class="branch"><svg class="i"><use href="#items"/></svg>Design Items</li>
      <li><svg class="i"><use href="#planes"/></svg>RIGHT</li>
      <li><svg class="i"><use href="#planes"/></svg>TOP</li>
      <li><svg class="i"><use href="#planes"/></svg>FRONT</li>
      <li><svg class="i"><use href="#csys"/></svg>PRT_CSYS_DEF</li>
      <li class="branch"><svg class="i"><use href="#extrude"/></svg>Extrude 1</li>
      <li><svg class="i"><use href="#axis"/></svg>A_1</li>
      <li><svg class="i"><use href="#axis"/></svg>A_2</li>
      <li><svg class="i"><use href="#hole"/></svg>Hole 1</li>
    </ul>
    <div class="insert"></div>
  </aside>

  <section class="view">
    <div class="overlay">
      <div class="viewbar">
        <button aria-label="Refit"><svg class="i"><use href="#zoomfit"/></svg></button>
        <button aria-label="Zoom in"><svg class="i"><use href="#zoomin"/></svg></button>
        <button aria-label="Zoom out"><svg class="i"><use href="#zoomout"/></svg></button>
        <button aria-label="Repaint"><svg class="i"><use href="#repaint"/></svg></button>
        <button class="corner" aria-label="Rendering"><svg class="i"><use href="#shading"/></svg></button>
        <button class="corner" aria-label="Display style"><svg class="i"><use href="#display"/></svg></button>
        <button class="corner" aria-label="Saved orientations"><svg class="i"><use href="#saved"/></svg></button>
        <button aria-label="View manager"><svg class="i"><use href="#capture"/></svg></button>
        <button aria-label="Perspective"><svg class="i"><use href="#perspective"/></svg></button>
        <button class="corner" aria-label="Section"><svg class="i"><use href="#section"/></svg></button>
        <button class="corner" aria-label="Datum display"><svg class="i"><use href="#datumdisp"/></svg></button>
        <button class="on" aria-label="Annotation display"><svg class="i"><use href="#annot"/></svg></button>
        <button aria-label="Spin center"><svg class="i"><use href="#spin"/></svg></button>
        <button aria-label="Simulate"><svg class="i"><use href="#analyze"/></svg></button>
        <button aria-label="Pause"><svg class="i"><use href="#pause"/></svg></button>
        <button aria-label="Resume"><svg class="i"><use href="#resume"/></svg></button>
      </div>
    </div>
    <svg class="model" viewBox="736 387 800 470" role="img" aria-label="Slotted block with one hole">
      <defs>
        <linearGradient id="side" gradientUnits="userSpaceOnUse" x1="853" y1="450" x2="1333" y2="886"><stop offset="0" stop-color="#989a9d"/><stop offset=".03" stop-color="#9ea2a5"/><stop offset=".08" stop-color="#9fa4a7"/><stop offset=".12" stop-color="#a1a2a5"/><stop offset=".528" stop-color="#a1a2a5"/><stop offset=".56" stop-color="#9da2a5"/><stop offset=".65" stop-color="#949699"/><stop offset=".75" stop-color="#858689"/><stop offset=".87" stop-color="#727377"/></linearGradient>
        <linearGradient id="bore" gradientUnits="userSpaceOnUse" x1="1238" y1="629" x2="1339" y2="720"><stop offset="0" stop-color="#727377"/><stop offset=".25" stop-color="#808184"/><stop offset=".75" stop-color="#98999c"/><stop offset="1" stop-color="#9fa4a7"/></linearGradient>
        <clipPath id="rim"><ellipse cx="1281" cy="667.500" rx="92.500" ry="81" transform="rotate(42.500 1281 667.500)"/></clipPath>
      </defs>
      <path fill="url(#side)" d="M793.500 516.100L853.500 450.100A185 162 42.500 0 1 980.900 402.300L1331.500 429.200A185 162 42.500 0 1 1477.800 726.400L1417.800 792.400Z"/>
      <path fill="#a3a7ab" d="M920.900 468.300L1271.500 495.200A185 162 42.500 0 1 1290.500 840.200L939.800 813.300A185 162 42.500 0 1 920.900 468.300Z"/>
      <g clip-path="url(#rim)">
        <path fill="url(#bore)" d="M1180 570h200v200h-200z"/>
        <ellipse cx="1341" cy="601.500" rx="92.500" ry="81" transform="rotate(42.500 1341 601.500)" fill="#e8eaee"/>
      </g>
    </svg>
  </section>
</main>

<footer class="status">
  <button class="on" aria-label="Toggle navigator"><svg class="i"><use href="#navtoggle"/></svg></button>
  <button aria-label="Browser"><svg class="i"><use href="#globe"/></svg></button>
  <button aria-label="Full screen"><svg class="i"><use href="#fullscreen"/></svg></button>
  <p>Datum planes will not be displayed.</p>
  <div class="find">
    <button aria-label="Find"><svg class="i"><use href="#binoculars"/></svg></button><button class="drop" aria-label="Find options"><i class="caret"></i></button>
  </div>
  <label class="pick"><select aria-label="Selection filter"><option>Geometry</option></select><span><i class="caret"></i></span></label>
</footer>
</div>
</body>
</html>
```
FILE: styles.css
```css
* { box-sizing: border-box; }
body { margin: 0; font: 14px/20px "Open Sans", "Noto Sans", sans-serif; color: #4a4e50; }
button { font: inherit; color: inherit; background: none; border: 0; padding: 0; display: flex; align-items: center; white-space: nowrap; }
svg { display: block; flex: none; }
.defs { position: absolute; }
.i { width: 20px; height: 20px; }
.m { width: 16px; height: 16px; }
.caret { flex: none; width: 9px; height: 6px; background: #666a6c; clip-path: polygon(0 0, 100% 0, 50% 100%); }
.off { color: #b4b6b8; }
.off .caret { background: #a9acad; }

.app { min-height: 100vh; display: flex; flex-direction: column; background: #f8f9fb; }

.titlebar { height: 34px; display: grid; grid-template-columns: 1fr auto 1fr; align-items: center; background: #dae0df; grid-template-areas: "left title right"; }
.brand { grid-area: left; display: flex; align-items: center; gap: 4px; padding-left: 9px; font: 24px/30px Lato, sans-serif; color: #5f6366; }
.brand span { display: flex; padding-bottom: 2px; }
.brand sup { font-size: 10px; line-height: 20px; }
.quick { grid-area: left; display: flex; align-items: center; margin-left: 107px; height: 34px; gap: 10px; }
.quick button { gap: 7px; }
.quick .more { height: 30px; border-left: 1px solid #a9afaf; padding-left: 9px; margin-left: -4px; }
.quick .more .caret { width: 11px; height: 8px; background: #333; clip-path: polygon(0 0, 100% 0, 100% 15%, 0 15%, 0 28%, 100% 28%, 50% 100%, 0 28%); }
h1 { grid-area: title; margin: 0; font: 300 17px/20px "Open Sans", sans-serif; color: #a9aeae; }
.winbtns { grid-area: right; justify-self: end; display: flex; gap: 20px; padding-right: 13px; }
.winbtns svg { width: 13px; height: 13px; }

.tabs { height: 35px; display: flex; background: #3e4649; color: #f1f3f3; font-size: 16px; }
.tabs > button { padding: 0 29px; justify-content: center; }
.tabs .file { width: 75px; padding: 0; background: linear-gradient(170deg, #67d03f, #4ea732); }
.tabs .on { width: 105px; padding: 0; background: #f8f9fb; color: #48812f; }
.help { margin-left: auto; display: flex; align-items: center; gap: 13px; padding: 0 10px 3px 0; }
.help button { gap: 8px; }
.help .caret { background: #fff; }
.help button:last-child { font-weight: 700; margin-left: 5px; }

.ribbon { display: flex; height: 136px; background: #f8f9fb; border-bottom: 1px solid #a9b5b5; }
.group { display: flex; flex-direction: column; margin: 3px 0 2px; border-right: 1px solid #b1b6b8; }
.tools { display: flex; flex: 1; }
.col { display: grid; grid-auto-rows: 34px; align-content: start; margin-top: -2px; }
.col button { padding-left: 4px; gap: 5px; }
.col .caret { margin-left: 4px; }
.big { flex-direction: column; align-self: start; line-height: 20px; padding: 4px 0 0 1px; }
.big svg { width: 40px; height: 40px; margin-bottom: 12px; }
.big .caret { margin-top: 5px; }
.name { justify-content: center; gap: 5px; height: 24px; }
.g-ops { width: 140px; }
.g-ops .big { width: 90px; }
.g-data { width: 183px; }
.g-body { width: 174px; }
.g-data .tools, .g-body .tools, .g-eng .tools { padding-left: 4px; }
.g-datum { width: 270px; }
.g-datum .big { width: 54px; }
.g-datum .col { width: 155px; }
.g-datum .col + .big { width: 60px; }
.g-shapes { width: 185px; }
.g-shapes .big { width: 64px; }
.g-eng { width: 201px; }
.g-eng .col:first-child { width: 108px; }
.g-edit { width: 445px; }
.g-edit .big { width: 60px; }
.g-edit .tools { display: grid; grid-template-columns: 60px 78px 91px 85px 1fr; }
.g-surf { width: 173px; }
.g-surf .big { width: 77px; }
.g-intent { width: 111px; }
.g-intent .big { width: 110px; }

.work { flex: 1; display: flex; }
.panel { width: 351px; flex: none; background: #f8faf9; border-right: 3px solid #d9dfde; }
.ptabs { height: 32px; display: flex; background: #d9dfde; }
.ptabs button { width: 39px; padding-left: 8px; }
.ptabs .on { background: #f8f9fb; padding-left: 12px; }
.ptools { height: 40px; display: flex; align-items: center; padding-left: 13px; }
.ptools button { width: 30px; padding-left: 5px; }
.ptools .first { width: 26px; padding-left: 0; }
.grip { width: 22px; height: 18px; border-left: 3px dotted #b3b8ba; }
.bar { width: 1px; height: 30px; background: #a9afb1; margin: 0 5px; }
.ptools .next { font-size: 20px; padding: 0 0 4px 20px; width: 38px; }
.corner { position: relative; }
.corner::after { content: ""; position: absolute; right: 2px; bottom: -2px; border: 2px solid transparent; border-right-color: #555; border-bottom-color: #555; }
.filter { display: flex; align-items: center; padding-left: 14px; height: 34px; }
.field { display: flex; align-items: center; margin-left: 4px; width: 252px; height: 34px; border: 1px solid #9eabb0; background: #fff; }
.field input { flex: 1; min-width: 0; height: 30px; border: 0; padding: 0 6px; background: none; font: inherit; }
.field button { padding-right: 6px; }
.x { width: 10px; height: 10px; }
.drop { padding: 0 6px; }
.plus { padding-left: 8px; }
.plus svg { width: 14px; height: 14px; }
.colhead { height: 27px; margin: 6px 6px 0 10px; border: solid #cdd1d2; border-width: 0 1px 1px 0; background: #fafafa; }
.treelist { list-style: none; margin: 0; padding: 1px 0 0; font-size: 12px; background: #f8f9fb; }
.treelist li { display: flex; align-items: center; gap: 6px; height: 22px; padding-left: 38px; }
.treelist .root { padding-left: 13px; }
.treelist .branch { padding-left: 20px; }
.branch::before { content: ""; width: 9px; height: 11px; margin-right: 3px; background: #888c8e; clip-path: polygon(0 0, 100% 50%, 0 100%); }
.insert { margin: 4px 6px 0 13px; height: 8px; border: solid #5cc33c; border-width: 0 2px; background: linear-gradient(#5cc33c, #5cc33c) center / 100% 2px no-repeat; }

.view { flex: 1; position: relative; display: flex; align-items: center; justify-content: center; background: #e8eaee; }
.model { width: 800px; height: 470px; }
.overlay { position: absolute; top: 7px; left: 0; right: 0; display: flex; justify-content: center; }
.viewbar { display: grid; grid-template-columns: repeat(16, 32px); height: 38px; padding: 4px 2px; border: 1px solid #989b9d; background: #f8f9fb; }
.viewbar button { justify-content: center; }
.viewbar .on { margin: 0 2px; }
.viewbar .on, .status .on { background: #dfe1e3; border: 1px solid #aaaeb0; }

.status { height: 42px; display: flex; align-items: center; border-top: 1px solid #a3b5b5; background: #f8faf9; padding-right: 21px; font: 12px/20px "Noto Sans", sans-serif; }
.status > button { width: 20px; height: 30px; margin-right: 10px; justify-content: center; }
.status > .on { width: 26px; margin: 0 7px; }
.status p { display: flex; align-items: center; gap: 6px; margin: 0 0 0 3px; padding: 0 0 2px 7px; height: 30px; border-left: 1px solid #b1b6b8; }
.status p::before { content: ""; width: 6px; height: 6px; border-radius: 50%; background: #176287; margin-bottom: 2px; }
.find { margin-left: auto; display: flex; height: 32px; border: solid #b1b6b8; border-width: 0 1px; padding: 1px 2px; position: relative; margin-right: 119px; }
.find::before { content: ""; position: absolute; left: -6px; top: 0; width: 1px; height: 32px; background: #b1b6b8; }
.find button { border: 1px solid #c1c5c6; padding: 0 6px; background: #fbfbfb; }
.find .drop { border-left: 0; padding: 0 4px; }
.pick { display: flex; width: 217px; height: 28px; border: 1px solid #a5aaac; background: #f7f7f7; }
.pick select { flex: 1; appearance: none; border: 0; padding: 0 8px; font: 14px/20px "Open Sans", sans-serif; color: #4a4e50; background: none; }
.pick span { width: 19px; border-left: 1px solid #a5aaac; display: flex; align-items: center; justify-content: center; }
```
